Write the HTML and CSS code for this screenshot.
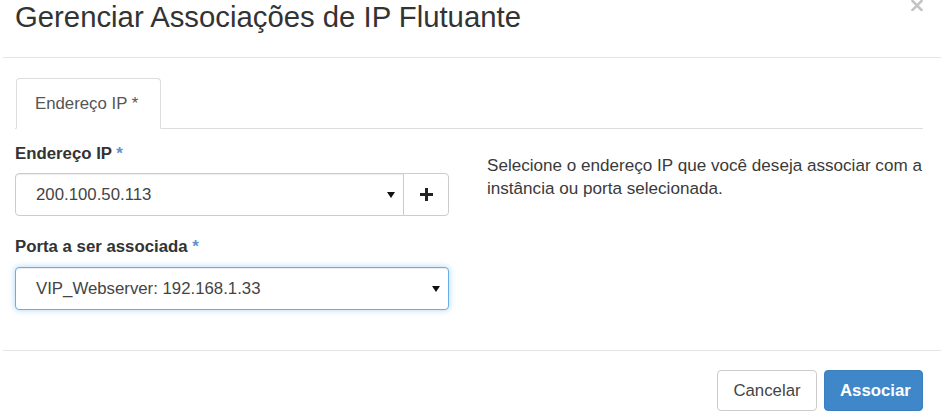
FILE: index.html
```html
<!DOCTYPE html>
<html lang="pt-BR">
<head>
<meta charset="utf-8">
<title>Gerenciar Associações de IP Flutuante</title>
<link rel="stylesheet" href="styles.css">
</head>
<body>
<div class="modal">
  <div class="modal-header">
    <h3 class="modal-title">Gerenciar Associações de IP Flutuante</h3>
    <button class="close" type="button" aria-label="Fechar">
      <svg width="12" height="11" viewBox="0 0 12 11"><path d="M1.5 1L10.5 10M10.5 1L1.5 10" stroke="#c4c4c4" stroke-width="2.6" stroke-linecap="square"/></svg>
    </button>
  </div>
  <div class="modal-body">
    <ul class="nav-tabs">
      <li class="tab active">Endereço IP *</li>
    </ul>
    <div class="tab-content">
      <div class="form-col">
        <div class="form-group">
          <label class="control-label">Endereço IP <span class="req">*</span></label>
          <div class="input-group">
            <div class="select">
              <span class="select-value">200.100.50.113</span>
              <svg class="caret" width="8" height="6" viewBox="0 0 8 6"><path d="M0 0H8L4 6Z" fill="#111"/></svg>
            </div>
            <button class="addon" type="button" aria-label="Adicionar">
              <svg width="13" height="13" viewBox="0 0 13 13"><path d="M5 0H8V5H13V8H8V13H5V8H0V5H5Z" fill="#222"/></svg>
            </button>
          </div>
        </div>
        <div class="form-group">
          <label class="control-label">Porta a ser associada <span class="req">*</span></label>
          <div class="select focused">
            <span class="select-value">VIP_Webserver: 192.168.1.33</span>
            <svg class="caret" width="8" height="6" viewBox="0 0 8 6"><path d="M0 0H8L4 6Z" fill="#111"/></svg>
          </div>
        </div>
      </div>
      <div class="help-col">
        <p>Selecione o endereço IP que você deseja associar com a instância ou porta selecionada.</p>
      </div>
    </div>
  </div>
  <div class="modal-footer">
    <button class="btn btn-default" type="button">Cancelar</button>
    <button class="btn btn-primary" type="button">Associar</button>
  </div>
</div>
</body>
</html>
```
FILE: styles.css
```css
* { box-sizing: border-box; }

html, body {
  margin: 0;
  padding: 0;
  background: #fff;
}

body {
  font-family: "Liberation Sans", Arial, Helvetica, sans-serif;
  font-size: 16.8px;
  line-height: 24px;
  color: #333;
  overflow: hidden;
}

.modal {
  margin-left: 3px;
  width: 938px;
}

.modal-header {
  display: flex;
  align-items: flex-start;
  height: 58px;
  padding: 0 18px 0 12px;
  border-bottom: 1px solid #e5e5e5;
}

.modal-title {
  flex: 1;
  margin: 0;
  font-size: 29.3px;
  line-height: 33px;
  font-weight: normal;
  color: #333;
}

.close {
  display: block;
  margin: 0;
  padding: 0;
  border: 0;
  background: transparent;
  line-height: 0;
  cursor: pointer;
}

.close svg {
  display: block;
}

.modal-body {
  padding: 20px 18px 40px 12px;
}

.nav-tabs {
  display: flex;
  margin: 0;
  padding: 0;
  list-style: none;
  border-bottom: 1px solid #ddd;
}

.tab {
  margin: 0 0 -1px 1px;
  padding: 13px 22px 12px 18px;
  line-height: 24px;
  color: #555;
  background: #fff;
  border: 1px solid #ddd;
  border-bottom-color: transparent;
  border-radius: 4px 4px 0 0;
}

.tab-content {
  display: grid;
  grid-template-columns: 434px 1fr;
  column-gap: 38px;
}

.form-group:first-child {
  padding-top: 13px;
  margin-bottom: 19px;
}

.control-label {
  display: block;
  margin-bottom: 7px;
  font-weight: bold;
  color: #333;
}

.form-group + .form-group .control-label {
  margin-bottom: 8px;
}

.req {
  color: #5a93cf;
}

.input-group {
  display: flex;
}

.select {
  display: flex;
  align-items: center;
  height: 43px;
  padding: 0 8px 0 20px;
  border: 1px solid #ccc;
  border-radius: 4px;
  background: #fff;
  color: #444;
  box-shadow: inset 0 1px 1px rgba(0, 0, 0, 0.075);
}

.input-group .select {
  flex: 1;
  border-radius: 4px 0 0 4px;
  position: relative;
  z-index: 1;
}

.select-value {
  flex: 1;
}

.caret {
  display: block;
  flex: none;
}

.select.focused {
  border-color: #66afe9;
  box-shadow: inset 0 1px 1px rgba(0, 0, 0, 0.075), 0 0 6px rgba(102, 175, 233, 0.55);
}

.addon {
  display: flex;
  align-items: center;
  justify-content: center;
  width: 46px;
  height: 43px;
  margin-left: -1px;
  padding: 0;
  border: 1px solid #ccc;
  border-radius: 0 4px 4px 0;
  background: #fff;
}

.help-col p {
  margin: 0;
  padding-top: 25px;
  font-size: 17.1px;
  line-height: 23px;
  color: #3a3a3a;
}

.modal-footer {
  display: flex;
  justify-content: flex-end;
  gap: 7px;
  padding: 19px 18px 20px 12px;
  border-top: 1px solid #e5e5e5;
}

.btn {
  height: 41px;
  padding: 0 15px;
  font-family: inherit;
  font-size: 16.8px;
  line-height: 24px;
  border: 1px solid transparent;
  border-radius: 4px;
  cursor: pointer;
}

.btn-default {
  width: 100px;
  color: #444;
  background: #fff;
  border-color: #ccc;
}

.btn-primary {
  width: 99px;
  font-weight: bold;
  color: #fff;
  background: #3f87c9;
  border-color: #3a7fbf;
}
```
